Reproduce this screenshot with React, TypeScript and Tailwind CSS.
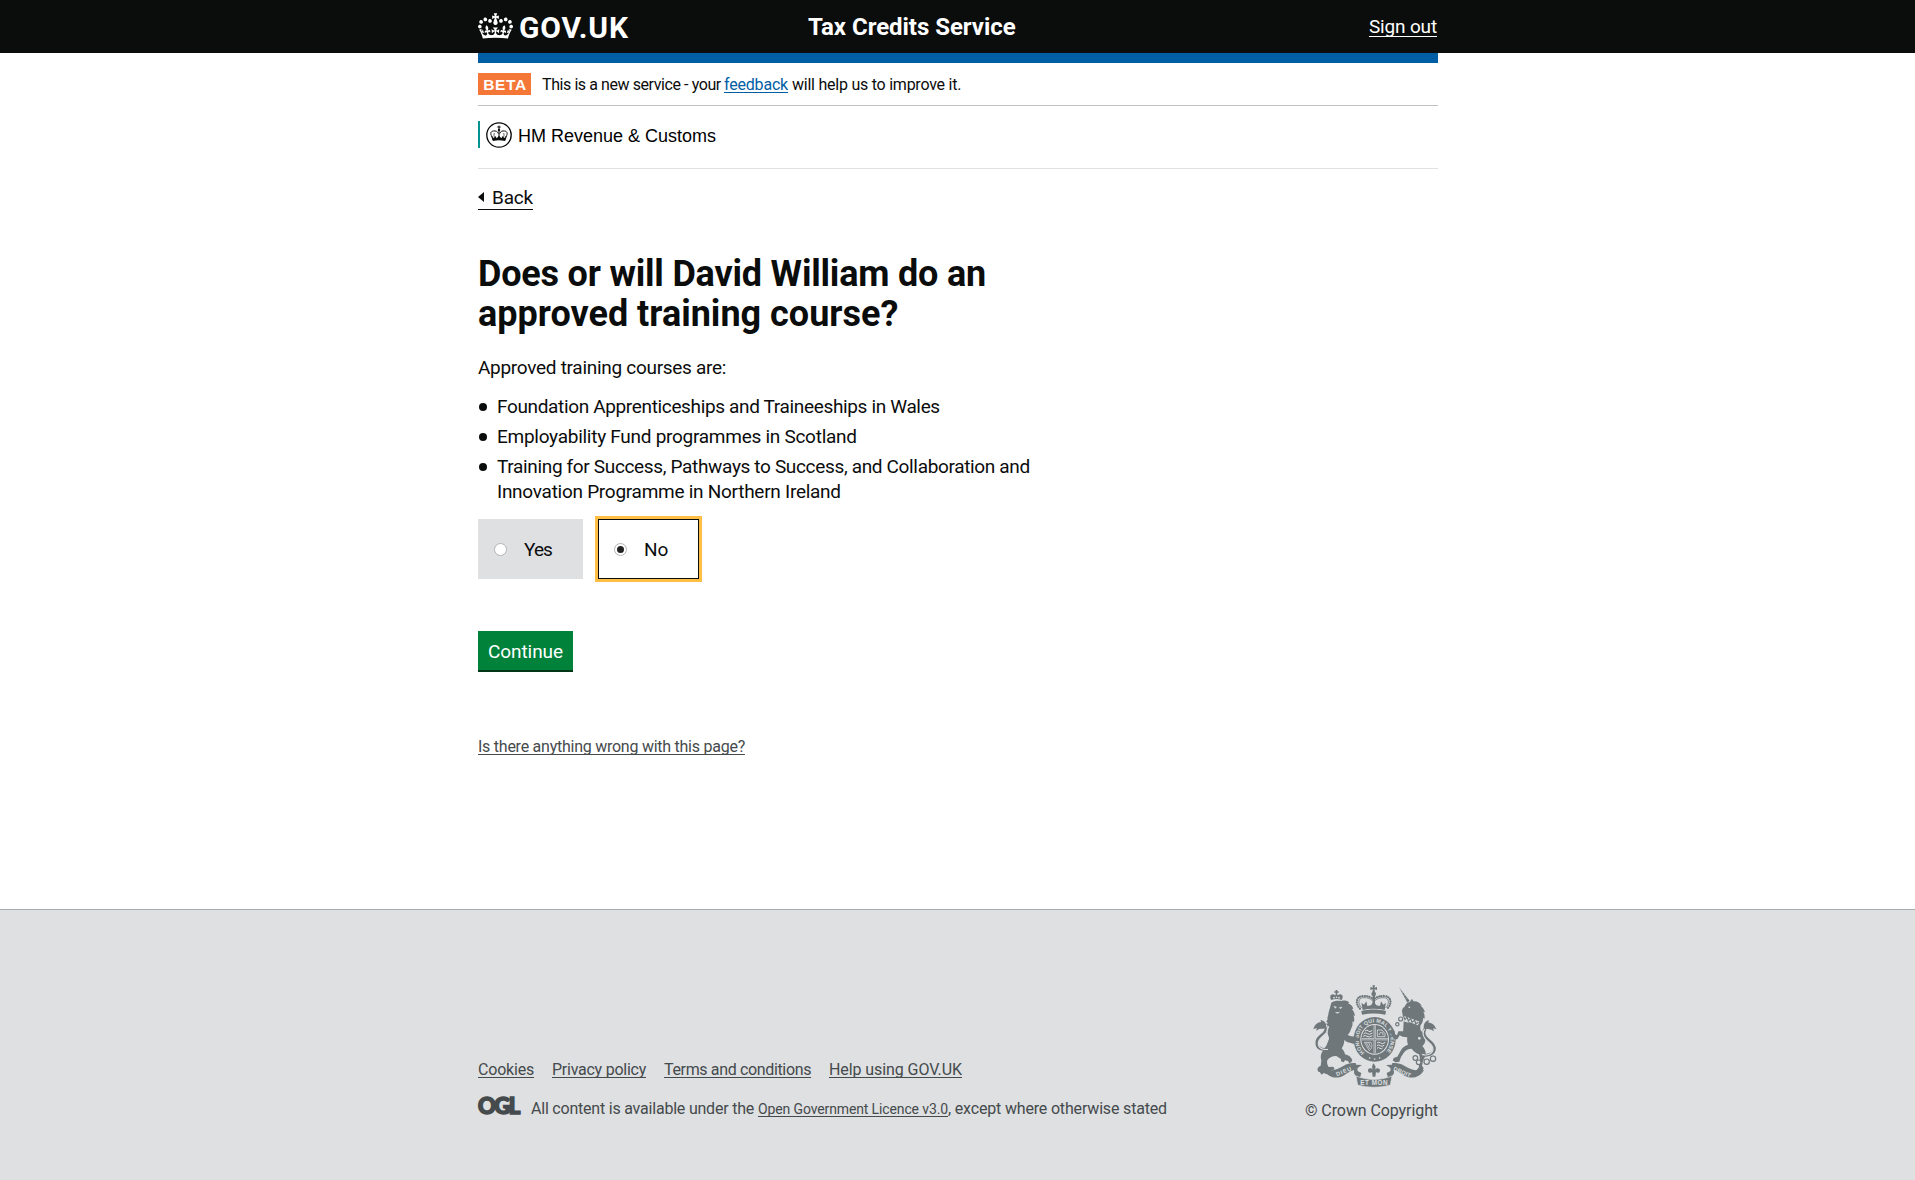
import { useState } from 'react';
import type { ReactNode } from 'react';

const CROWN =
  'M25 30.2c3.5 1.5 7.7-.2 9.1-3.7 1.5-3.6-.2-7.8-3.9-9.2-3.6-1.4-7.6.3-9.1 3.9-1.4 3.5.3 7.5 3.9 9zM9 39.5c3.6 1.5 7.8-.2 9.2-3.7 1.5-3.6-.2-7.8-3.9-9.1-3.6-1.5-7.6.2-9.1 3.8-1.4 3.5.3 7.5 3.8 9zM4.4 57.2c3.5 1.5 7.7-.2 9.1-3.8 1.5-3.6-.2-7.7-3.9-9.1-3.5-1.5-7.6.3-9.1 3.8-1.4 3.5.3 7.6 3.9 9.1zm38.3-21.4c3.5 1.5 7.7-.2 9.1-3.8 1.5-3.6-.2-7.7-3.9-9.1-3.6-1.5-7.6.3-9.1 3.8-1.3 3.6.4 7.7 3.9 9.1zm64.4-5.6c-3.6 1.5-7.8-.2-9.1-3.7-1.5-3.6.2-7.8 3.8-9.2 3.6-1.4 7.7.3 9.2 3.9 1.3 3.5-.4 7.5-3.9 9zm15.9 9.3c-3.6 1.5-7.7-.2-9.1-3.7-1.5-3.6.2-7.8 3.7-9.1 3.6-1.5 7.7.2 9.2 3.8 1.5 3.5-.3 7.5-3.8 9zm4.7 17.7c-3.6 1.5-7.8-.2-9.2-3.8-1.5-3.6.2-7.7 3.9-9.1 3.6-1.5 7.7.3 9.2 3.8 1.3 3.5-.4 7.6-3.9 9.1zM89.3 35.8c-3.6 1.5-7.8-.2-9.2-3.8-1.4-3.6.2-7.7 3.9-9.1 3.6-1.5 7.7.3 9.2 3.8 1.4 3.6-.3 7.7-3.9 9.1zM69.7 17.7l8.9 4.7V9.3l-8.9 2.8c-.2-.3-.5-.6-.9-.9L72.4 0H59.6l3.5 11.2c-.3.3-.6.5-.9.9l-8.8-2.8v13.1l8.8-4.7c.3.3.6.7.9.9l-5 15.4v.1c-.2.8-.4 1.6-.4 2.4 0 4.1 3.1 7.5 7 8.1h.2c.3 0 .7.1 1 .1.4 0 .7 0 1-.1h.2c4-.6 7.1-4.1 7.1-8.1 0-.8-.1-1.7-.4-2.4V34l-5.1-15.4c.4-.2.7-.6 1-.9zM66 92.8c16.9 0 32.8 1.1 47.1 3.2 4-16.9 8.9-26.7 14-33.5l-9.6-3.4c1 4.9 1.1 7.2 0 10.2-1.5-1.4-3-4.3-4.2-8.7L108.6 76c2.8-2 5-3.2 7.5-3.3-4.4 9.4-10 11.9-13.6 11.2-4.3-.8-6.3-4.6-5.6-7.9 1-4.7 5.7-5.9 8-.5 4.3-8.7-3-11.4-7.6-8.8 7.1-7.2 7.9-13.5 2.1-21.1-8 6.1-8.1 12.3-4.5 20.8-4.7-5.4-12.1-2.5-9.5 6.2 3.4-5.2 7.9-2 7.2 3.1-.6 4.3-6.4 7.8-13.5 7.2-10.3-.9-10.9-8-11.2-13.8 2.5-.5 7.1 1.8 11 7.3L80.2 60c-4.1 4.4-8 5.3-12.3 5.4 1.4-4.4 8-11.6 8-11.6H55.5s6.4 7.2 7.9 11.6c-4.2-.1-8-1-12.3-5.4l1.4 16.4c3.9-5.5 8.5-7.7 10.9-7.3-.3 5.8-.9 12.8-11.1 13.8-7.2.6-12.9-2.9-13.5-7.2-.7-5 3.8-8.3 7.1-3.1 2.7-8.7-4.6-11.6-9.4-6.2 3.7-8.5 3.6-14.7-4.6-20.8-5.8 7.6-5 13.9 2.2 21.1-4.7-2.6-11.9.1-7.7 8.8 2.3-5.5 7.1-4.2 8.1.5.7 3.3-1.3 7.1-5.7 7.9-3.5.7-9-1.8-13.5-11.2 2.5.1 4.7 1.3 7.5 3.3l-4.7-15.4c-1.2 4.4-2.7 7.2-4.3 8.7-1.1-3-.9-5.3 0-10.2l-9.5 3.4c5 6.9 9.9 16.7 14 33.5 14.8-2.1 30.8-3.2 47.7-3.2z';

function Container({ children, className = '' }: { children?: ReactNode; className?: string }) {
  return (
    <div className="pl-px">
      <div className={`mx-auto w-[960px] ${className}`}>{children}</div>
    </div>
  );
}

function CrownIcon() {
  return (
    <svg className="mt-px h-[26px] w-[35px] shrink-0" viewBox="0 0 132 97" fill="#fff">
      <path d={CROWN} />
    </svg>
  );
}

function HmrcCrest() {
  return (
    <svg className="mt-px size-[26px] shrink-0" viewBox="0 0 78 78" fill="none" stroke="#0b0c0c">
      <circle cx="39" cy="39" r="36.6" strokeWidth="4" />
      <g strokeWidth="3">
        <path d="M39 11v12M34 15h10" />
        <path d="M39 27v20" />
        <path d="M18 44c-6-9-4-16 4-17 7-1 13 1 15 8" />
        <path d="M60 44c6-9 4-16-4-17-7-1-13 1-15 8" />
        <path d="M25 33c-2 5-1 10 2 15M53 33c2 5 1 10-2 15" strokeWidth="2" />
        <path d="M17 42l4 13M61 42l-4 13" />
      </g>
      <circle cx="39" cy="24" r="3.6" fill="#0b0c0c" stroke="none" />
      <path
        d="M18 43l6 6 4-7 4 7 7-8 7 8 4-7 4 7 6-6-3 14c-12-3-24-3-36 0z"
        fill="#0b0c0c"
        stroke="none"
      />
    </svg>
  );
}

function RoyalArms() {
  return (
    <svg className="-mr-[2px] h-[110px] w-[130px]" viewBox="0 0 390 330" fill="#6f777b">
      {/* crown */}
      <path d="M187 16h8l-2 7 8-2v9l-8-2 2 8h-8l2-8-8 2v-9l8 2z" />
      <circle cx="191" cy="42" r="7" />
      <path
        d="M150 86c-15-16-12-36 8-38 14-1 27 3 33 11 6-8 19-12 33-11 20 2 23 22 8 38"
        fill="none"
        stroke="#6f777b"
        strokeWidth="6.500"
        strokeLinecap="round"
        strokeDasharray="0.5 6.5"
      />
      <path
        d="M155 84c-13-14-10-30 4-31 14-1 25 3 32 13 7-10 18-14 32-13 14 1 17 17 4 31"
        fill="none"
        stroke="#6f777b"
        strokeWidth="2.500"
      />
      <path d="M188 48h7v32h-7z" />
      <path d="M154 68l8 6 7-10 3 14 11-2 8-12 8 12 11 2 3-14 7 10 8-6-4 22c-22-5-44-5-66 0z" />
      <path d="M154 93c24-6 50-6 74 0l-2 11c-24-5-46-5-70 0z" />
      {/* garter and quartered shield */}
      <ellipse cx="194" cy="178" rx="63" ry="67" />
      <ellipse cx="194" cy="178" rx="43" ry="46" fill="#dee0e2" />
      <ellipse cx="194" cy="178" rx="40" ry="43" />
      <defs>
        <path id="garter" d="M165 219A48 51 0 1 1 223 219" />
      </defs>
      <text fill="#dee0e2" fontFamily="Liberation Sans, sans-serif" fontWeight="700" fontSize="16">
        <textPath href="#garter" startOffset="2" textLength="238">
          HONI SOIT QUI MAL Y PENSE
        </textPath>
      </text>
      <path d="M194 136v84M155 178h78" stroke="#dee0e2" strokeWidth="6" />
      <path d="M194 136v84M155 178h78" stroke="#6f777b" strokeWidth="2" />
      <g fill="none" stroke="#dee0e2" strokeWidth="3">
        <path d="M165 153q6-5 10 0t12-2M161 161q6-5 11 0t15-2M159 169q7-5 12 0t16-2" />
        <path d="M202 150h14l9 11v9h-23zM207 165q2-9 8-8t4 9" strokeWidth="2.500" />
        <path d="M163 187l15 25c9-8 9-17 5-25zM169 188l10 18M176 188l5 12" strokeWidth="2.200" />
        <path d="M201 189q6-5 11 0t14-2M201 197q6-5 10 0t12-2M201 205q5-5 9 0t8-2" />
      </g>
      <g fill="#dee0e2">
        <circle cx="179" cy="234" r="2.500" />
        <circle cx="194" cy="237" r="2.500" />
        <circle cx="209" cy="234" r="2.500" />
      </g>
      {/* lion */}
      <path d="M64 60c-5-8-4-17 5-17l8 3v-8h-4v-4h4v-4h5v4h4v4h-4v8l8-3c9 0 10 9 5 17-10-4-21-4-31 0z" />
      <g fill="#dee0e2">
        <circle cx="72" cy="53" r="2.500" />
        <circle cx="87" cy="53" r="2.500" />
        <circle cx="79.500" cy="52" r="2.500" />
      </g>
      <path d="M64 68c8-6 20-6 30-5 8-3 18-1 24 4l-4 3c9 3 14 9 16 17l-5-1c6 7 9 14 10 22l-5-2c3 7 4 14 1 21l-4-3c2 9 0 16-4 23-2 8-5 13-10 18 6 2 14 6 18 4l8-5-2 6 5 2-3 5 4 5-7 3-3 7-8-2-14-4-8-6c0 9-3 18-8 25 6 6 8 10 10 18 9 2 18 7 22 17l-3 7-6 3-4-7-9-2-4 6-8-3v-7l-14-9c-10-1-22 4-27 13-2 8 0 14 4 20l12-1c5 1 6 5 4 9l-8 1 1 7-9-1-5 7-10-4-6 5-6-8-4-1c-4-5-3-11 2-15l5-3 2-14c0-6-3-9-1-18 2-10 10-20 16-28l8-20c1-7-4-12-4-19 0-9 4-13 4-19l-7-3 3-8-4-3 4-7-1-4c3-6 3-16 6-24z" />
      <path
        d="M72 79l7 2-3 4zM88 83l8-2-4 5zM76 97c5 4 9 3 13-1"
        fill="#dee0e2"
        stroke="#dee0e2"
        strokeWidth="1.500"
      />
      <path
        d="M54 208c-13 2-30-1-33-15-4-19 15-25 23-36 6-8 6-17 1-25"
        fill="none"
        stroke="#6f777b"
        strokeWidth="9"
      />
      <path
        d="M54 208c-12 2-27-2-29-15-3-17 15-23 23-34 6-9 5-18 0-25"
        fill="none"
        stroke="#dee0e2"
        strokeWidth="3.500"
      />
      <path d="M48 143c2-13-5-22-17-23l3 6c-12 0-20 9-24 22l10-4-1 9c7-8 15-7 23-7z" />
      {/* unicorn */}
      <path d="M267 22l32 40-7 6z" />
      <path d="M269 32l7-3M274 40l8-4M280 49l8-5M286 57l8-5" stroke="#dee0e2" strokeWidth="1.200" />
      <path d="M276 94c0-7 3-11 8-14 3-8 7-13 16-15l6-9 4 8c11-1 21 5 25 13l-4 0c8 5 12 12 14 20l-5-2c4 7 5 15 3 22l-4-4c1 9-2 17-7 22-2 5-1 11 0 16 8 9 14 18 14 29 0 9-5 14-9 19 8 8 12 18 9 29l-7 15-3 14 5 8-6 10-12 3-6-5 9-10 3-18c1-9 1-16-2-22-8-4-16-8-22-17-11 0-17 4-22 10l-10 15-5 14-12 2-8-6 4-8 10-3 10-18c5-10 12-15 22-18-3-8-3-15-2-22l-14-2-9-4-7 12-9 0-13-20 3-9 7-1 5 8-1 6 7 4 4-12 14 0 14 4 4-22c-3-7-2-14 2-20l-12 4-8-8z" />
      <path d="M281 124l44 14 8 30-32 8-22-12z" />
      <path d="M278 113l48 17" fill="none" stroke="#dee0e2" strokeWidth="12" />
      <path
        d="M280 107l5 12 6-8 4 12 7-8 4 12 8-7 3 12 8-6"
        fill="none"
        stroke="#6f777b"
        strokeWidth="3.500"
      />
      <circle cx="298" cy="82" r="2.500" fill="#dee0e2" />
      <path
        d="M336 223c16 6 36 0 37-16 1-17-17-23-25-33-7-9-8-22-1-32"
        fill="none"
        stroke="#6f777b"
        strokeWidth="9"
      />
      <path
        d="M336 223c15 5 32 0 33-15 1-15-17-22-24-32-7-10-7-21-1-30"
        fill="none"
        stroke="#dee0e2"
        strokeWidth="3.500"
      />
      <path d="M342 146c-3-13 4-23 15-25l-2 7c12 0 20 8 24 20l-9-3 1 9c-9-9-18-6-29-8z" />
      <g fill="#dee0e2" stroke="#6f777b" strokeWidth="3.500">
        <circle cx="262" cy="133" r="5" />
        <circle cx="272" cy="117" r="6" />
        <circle cx="328" cy="175" r="6" />
        <circle cx="316" cy="234" r="7" />
        <circle cx="326" cy="247" r="7" />
        <circle cx="350" cy="245" r="8" />
        <circle cx="369" cy="236" r="8" />
      </g>
      {/* flower under the shield */}
      <path d="M190 250c8 8 8 14 4 20 6-8 16-6 16 2 0 6-8 8-12 4l-2 14h-8l-2-14c-4 4-12 2-12-4 0-8 10-10 16-2-5-6-5-12 0-20z" />
      {/* motto ribbon */}
      <path d="M42 270c18 4 38 0 58-12 14-8 26-10 38-8v20c-14 0-24 8-34 15-18 12-48 12-62-15z" />
      <path d="M342 270c-18 4-38 0-58-12-14-8-26-10-38-8v20c14 0 24 8 34 15 18 12 48 12 62-15z" />
      <path d="M138 254l18 1c-11 6-15 10-14 15 1 5 6 6 12 9l-4 14c-11-3-18-8-18-16s2-16 6-23zM246 254l-18 1c11 6 15 10 14 15-1 5-6 6-12 9l4 14c11-3 18-8 18-16s-2-16-6-23z" />
      <path d="M138 288c36 14 72 14 108 0l-5 27c-32 9-66 9-98 0z" stroke="#dee0e2" strokeWidth="2" />
      <g fill="#dee0e2" fontFamily="Liberation Sans, sans-serif" fontWeight="700">
        <text x="192" y="316" fontSize="19" textAnchor="middle" textLength="82">
          ET MON
        </text>
        <text transform="translate(81 289) rotate(-23)" fontSize="17" textLength="48">
          DIEU
        </text>
        <text transform="translate(249 270) rotate(24)" fontSize="17" textLength="55">
          DROIT
        </text>
      </g>
    </svg>
  );
}

function OglLogo() {
  return (
    <svg className="mt-[-2px] h-[22px] w-[43px] shrink-0 overflow-visible" viewBox="0 0 43 22">
      <text
        x="0"
        y="17.300"
        fill="#454a4c"
        stroke="#454a4c"
        strokeWidth="1.600"
        fontFamily="Lato, sans-serif"
        fontWeight="900"
        fontSize="22"
        letterSpacing="-1.500"
      >
        OGL
      </text>
    </svg>
  );
}

function Radio({ checked }: { checked: boolean }) {
  return (
    <span className="flex size-[13px] items-center justify-center rounded-full border border-[#b4b4b4] bg-white">
      {checked && <span className="size-[7px] rounded-full bg-[#222]" />}
    </span>
  );
}

function Bullet() {
  return <span className="mt-[9px] mr-[10px] ml-px size-[8px] shrink-0 rounded-full bg-[#0b0c0c]" />;
}

const footerLinks = [
  { label: 'Cookies', className: 'w-[56px] tracking-[-0.2px]' },
  { label: 'Privacy policy', className: 'w-[94px] tracking-[-0.25px]' },
  { label: 'Terms and conditions', className: 'w-[147px] tracking-[-0.35px]' },
  { label: 'Help using GOV.UK', className: 'w-[133px] tracking-[-0.08px]' },
];

export default function App() {
  const [answer, setAnswer] = useState<'yes' | 'no'>('no');

  return (
    <div className="flex h-[1180px] flex-col overflow-hidden bg-white font-['Roboto',sans-serif] text-[19px] leading-[25px] whitespace-nowrap text-[#0b0c0c]">
      <header className="h-[53px] shrink-0 bg-[#0b0c0c] text-white">
        <Container className="flex">
          <a href="#" className="mt-[12px] flex w-[330px] gap-[6px]">
            <CrownIcon />
            <span className="text-[30px] leading-[32px] font-bold tracking-[0.84px]">GOV.UK</span>
          </a>
          <span className="mt-[15px] text-[24px] leading-[24px] font-bold tracking-[-0.04px]">
            Tax Credits Service
          </span>
          <a
            href="#"
            className="mt-[14px] mr-px ml-auto tracking-[-0.16px] underline decoration-1 underline-offset-[3px] [text-decoration-skip-ink:none]"
          >
            Sign out
          </a>
        </Container>
      </header>

      <Container className="h-[10px] bg-[#005ea5]" />

      <Container className="flex h-[43px] border-b border-[#bfc1c3] pt-[10px] text-[16px] leading-[20px]">
        <strong className="mr-[11px] flex h-[22px] w-[53px] justify-center bg-[#f47738] pl-px font-['Liberation_Sans',sans-serif] text-[15.5px] leading-[23px] tracking-[0.6px] text-white">
          BETA
        </strong>
        <p className="mt-[2px] flex">
          <span className="w-[182px] tracking-[-0.42px]">This is a new service - your</span>
          <a
            href="#"
            className="mr-[4px] w-[64px] tracking-[-0.19px] text-[#005ea5] underline decoration-1 underline-offset-2 [text-decoration-skip-ink:none]"
          >
            feedback
          </a>
          <span className="tracking-[-0.24px]">will help us to improve it.</span>
        </p>
      </Container>

      <Container className="flex h-[63px] border-b border-[#dee0e2] pt-[15px]">
        <div className="flex h-[27px] border-l-2 border-[#009390] pl-[6px]">
          <HmrcCrest />
          <span className="mt-[2px] ml-[6px] font-['Liberation_Sans',sans-serif] text-[18px] leading-[27px] text-black">
            HM Revenue &amp; Customs
          </span>
        </div>
      </Container>

      <main>
        <Container>
          <a
            href="#"
            className="mt-[16px] flex h-[25px] w-[55px] items-center border-b border-[#0b0c0c] tracking-[-0.17px]"
          >
            <span className="mr-[8px] border-y-[5px] border-r-[6px] border-y-transparent border-r-[#0b0c0c]" />
            Back
          </a>

          <h1 className="mt-[44px] text-[36px] leading-[40px] font-bold">
            <span className="block tracking-[-0.2px]">Does or will David William do an</span>
            <span className="block">approved training course?</span>
          </h1>

          <p className="mt-[21px] tracking-[-0.29px]">Approved training courses are:</p>

          <ul className="mt-[14px] flex flex-col gap-[5px]">
            <li className="flex tracking-[-0.35px]">
              <Bullet />
              Foundation Apprenticeships and Traineeships in Wales
            </li>
            <li className="flex tracking-[-0.27px]">
              <Bullet />
              Employability Fund programmes in Scotland
            </li>
            <li className="flex">
              <Bullet />
              <span>
                <span className="block tracking-[-0.34px]">
                  Training for Success, Pathways to Success, and Collaboration and
                </span>
                <span className="block tracking-[-0.27px]">Innovation Programme in Northern Ireland</span>
              </span>
            </li>
          </ul>

          <div className="mt-[15px] flex gap-[15px]">
            <button
              type="button"
              onClick={() => setAnswer('yes')}
              className="flex h-[60px] w-[105px] items-center bg-[#dee0e2] pl-[16px] tracking-[-0.9px]"
            >
              <Radio checked={answer === 'yes'} />
              <span className="ml-[17px]">Yes</span>
            </button>
            <button
              type="button"
              onClick={() => setAnswer('no')}
              className="flex h-[60px] w-[101px] items-center border border-[#0b0c0c] bg-white pl-[15px] outline-3 outline-[#ffbf47]"
            >
              <Radio checked={answer === 'no'} />
              <span className="ml-[17px]">No</span>
            </button>
          </div>

          <button
            type="button"
            className="mt-[52px] flex h-[39px] w-[95px] justify-center bg-[#00823b] pt-[8px] tracking-[-0.07px] text-white shadow-[0_2px_0_#003618]"
          >
            Continue
          </button>

          <a
            href="#"
            className="mt-[67px] block w-fit text-[16px] leading-[20px] tracking-[-0.25px] text-[#454a4c] underline decoration-1 underline-offset-2 [text-decoration-skip-ink:none]"
          >
            Is there anything wrong with this page?
          </a>
        </Container>
      </main>

      <footer className="mt-auto h-[271px] shrink-0 border-t border-[#a1acb2] bg-[#dee0e2] text-[16px] leading-[20px] text-[#454a4c]">
        <Container className="flex justify-between">
          <div className="pt-[150px]">
            <nav className="flex gap-[18px]">
              {footerLinks.map((link) => (
                <a
                  key={link.label}
                  href="#"
                  className={`underline decoration-1 underline-offset-2 [text-decoration-skip-ink:none] ${link.className}`}
                >
                  {link.label}
                </a>
              ))}
            </nav>
            <div className="mt-[19px] flex">
              <OglLogo />
              <p className="ml-[10px] flex items-baseline">
                <span className="w-[227px] tracking-[-0.21px]">All content is available under the</span>
                <a
                  href="#"
                  className="text-[14px] tracking-[-0.125px] underline decoration-1 underline-offset-2 [text-decoration-skip-ink:none]"
                >
                  Open Government Licence v3.0
                </a>
                <span className="tracking-[-0.17px]">, except where otherwise stated</span>
              </p>
            </div>
          </div>
          <div className="flex flex-col items-end pt-[70px]">
            <RoyalArms />
            <span className="mt-[11px] tracking-[-0.09px]">© Crown Copyright</span>
          </div>
        </Container>
      </footer>
    </div>
  );
}
